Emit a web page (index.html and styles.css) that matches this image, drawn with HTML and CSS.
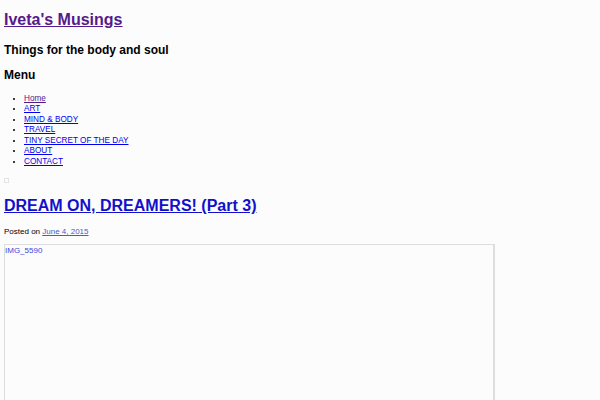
FILE: index.html
```html
<!DOCTYPE html>
<html lang="en">
<head>
    <meta charset="UTF-8">
    <title>Iveta's Musings</title>
    <link rel="stylesheet" href="styles.css">
</head>
<body>
    <header class="site-header">
        <h1 class="site-title"><a class="visited" href="#">Iveta's Musings</a></h1>
        <h2 class="site-description">Things for the body and soul</h2>
        <nav class="main-nav">
            <h3 class="menu-toggle">Menu</h3>
            <ul class="menu">
                <li><a class="visited" href="#">Home</a></li>
                <li><a href="#">ART</a></li>
                <li><a href="#">MIND &amp; BODY</a></li>
                <li><a href="#">TRAVEL</a></li>
                <li><a href="#">TINY SECRET OF THE DAY</a></li>
                <li><a href="#">ABOUT</a></li>
                <li><a href="#">CONTACT</a></li>
            </ul>
        </nav>
        <span class="broken-img"></span>
    </header>

    <article class="post">
        <h1 class="entry-title"><a href="#">DREAM ON, DREAMERS! (Part 3)</a></h1>
        <p class="entry-meta">Posted on <a class="soft" href="#">June 4, 2015</a></p>
        <div class="entry-image">
            <span class="img-alt">IMG_5590</span>
        </div>
    </article>
</body>
</html>
```
FILE: styles.css
```css
body {
    margin: 0;
    padding: 0 4px;
    background-color: #fcfcfc;
    color: #000;
    font-family: "Liberation Sans", Arial, sans-serif;
}
a {
    color: #0000ee;
}
a.visited {
    color: #551a8b;
}
.site-title {
    font-size: 16px;
    font-weight: bold;
    margin: 0;
    padding-top: 10px;
    line-height: 20px;
}
.site-description {
    font-size: 12px;
    margin: 13px 0 0;
    line-height: 14px;
}
.menu-toggle {
    font-size: 12px;
    margin: 11px 0 0;
    line-height: 14px;
}
.menu {
    font-size: 8.2px;
    margin: 12px 0 0;
    padding-left: 20px;
    line-height: 10.45px;
}
.broken-img {
    display: block;
    width: 3px;
    height: 3px;
    border: 1px solid #e4e4e4;
    margin-top: 11px;
}
.entry-title {
    font-size: 16px;
    font-weight: bold;
    margin: 13px 0 0;
    line-height: 20px;
}
.entry-title a {
    color: #1111cc;
}
.entry-meta {
    font-size: 8px;
    margin: 11px 0 0;
    line-height: 10px;
}
.soft {
    color: #5555cc;
}
.entry-image {
    width: 488px;
    height: 200px;
    margin-top: 7px;
    border: 1px solid #dddddd;
    border-right-width: 2px;
    border-bottom: none;
}
.img-alt {
    display: block;
    font-size: 8px;
    color: #4444dd;
    padding-top: 1px;
}
```
